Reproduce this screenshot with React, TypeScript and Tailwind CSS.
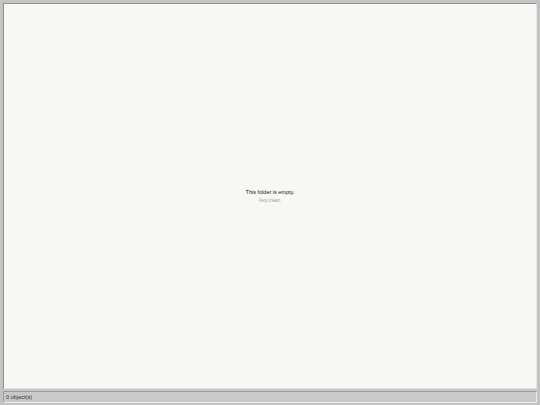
export default function App() {
  return (
    <div className="flex h-[405px] w-[540px] flex-col gap-[2px] bg-[#c3c3c3] px-[3px] pt-[3px] pb-[2px] font-['Liberation_Sans',Arial,sans-serif]">
      <div className="flex flex-1 flex-col items-center justify-center border border-t-[#8f8f8f] border-l-[#8f8f8f] border-b-[#e4e4e4] border-r-[#e4e4e4] bg-[#f7f7f3]">
        <div className="text-[5.5px] leading-[7px] text-[#222]">This folder is empty.</div>
        <div className="mt-[2px] text-[4.6px] leading-[6px] text-[#9c9c9c]">Very clean.</div>
      </div>
      <div className="flex h-[12px] items-center border border-t-[#9a9a9a] border-l-[#9a9a9a] border-b-[#ececec] border-r-[#ececec] bg-[#c9c9c9] px-[2px] pt-[1px]">
        <span className="text-[5.6px] leading-none text-[#333]">0 object(s)</span>
      </div>
    </div>
  );
}
